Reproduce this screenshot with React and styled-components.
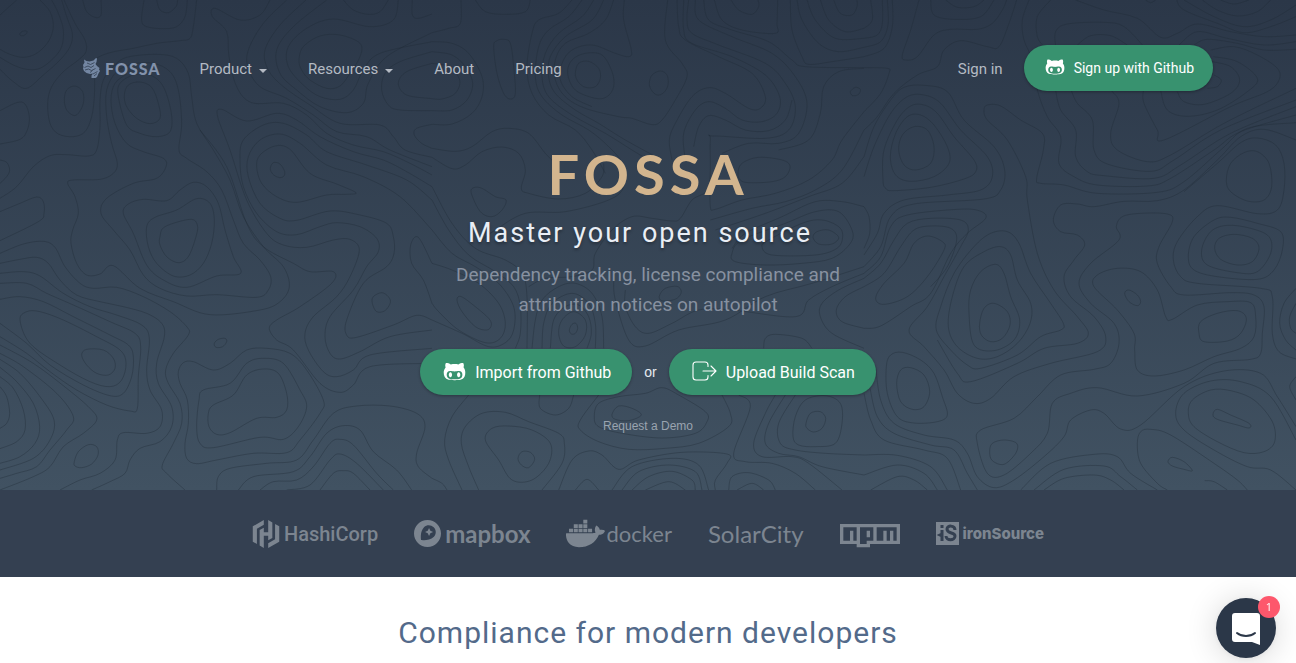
import React from 'react';
import styled, { createGlobalStyle } from 'styled-components';
import { FaGithubAlt, FaDocker, FaNpm } from 'react-icons/fa';
import { SiHashicorp, SiMapbox } from 'react-icons/si';

const GlobalStyle = createGlobalStyle`
  * {
    box-sizing: border-box;
  }

  body {
    margin: 0;
    background: #ffffff;
    font-family: Roboto, 'Liberation Sans', sans-serif;
  }

  a {
    color: inherit;
    text-decoration: none;
  }
`;

const Hero = styled.header`
  position: relative;
  padding: 45px 0 54px;
  background: linear-gradient(#2b3748, #415262);
`;

const Topography = styled.svg`
  position: absolute;
  inset: 0;
  width: 100%;
  height: 100%;
  fill: none;
  stroke: #1f2a36;
  stroke-width: 3;
  stroke-opacity: 0.36;
`;

const Container = styled.div`
  position: relative;
  max-width: 1170px;
  margin: 0 auto;
  padding: 0 20px;
`;

const Nav = styled.nav`
  display: flex;
  align-items: center;
  height: 46px;
`;

const Brand = styled.a`
  display: flex;
  align-items: center;
  gap: 5px;
  margin-right: 39px;
  color: #8292ab;
  font-family: Lato, sans-serif;
  font-size: 16px;
  font-weight: 900;
  letter-spacing: 1px;
`;

const NavLinks = styled.div`
  display: flex;
  flex: 1;
  gap: 41px;
`;

const NavItem = styled.a`
  display: flex;
  align-items: center;
  gap: 7px;
  padding-top: 2px;
  color: #b4bac3;
  font-size: 15px;
  line-height: 20px;
`;

const Caret = styled.span`
  margin-top: 3px;
  border: 4px solid transparent;
  border-top-color: currentColor;
  border-bottom: 0;
`;

const PillButton = styled.button`
  display: flex;
  align-items: center;
  gap: 9px;
  height: 46px;
  padding: 0 ${props => (props.$large ? 21 : 19)}px 0 ${props => (props.$large ? 23 : 21)}px;
  border: 0;
  border-radius: 23px;
  background: #38926f;
  box-shadow: 0 1px 3px rgba(0, 0, 0, 0.3);
  color: #ffffff;
  font-family: inherit;
  font-size: ${props => (props.$large ? 16 : 14)}px;
  font-weight: 400;
  cursor: pointer;

  svg {
    margin-bottom: 2px;
  }
`;

const NavActions = styled.div`
  display: flex;
  align-items: center;
  gap: 21px;
`;

const Intro = styled.div`
  display: flex;
  flex-direction: column;
  align-items: center;
  margin-top: 47px;
  text-align: center;
`;

const Wordmark = styled.div`
  color: #d3b58e;
  font-family: Lato, sans-serif;
  font-size: 56px;
  font-weight: 700;
  line-height: 72px;
  letter-spacing: 5px;
`;

const Tagline = styled.h1`
  margin: 5px 0 0;
  padding-right: 16px;
  color: #e9eef5;
  font-size: 27px;
  font-weight: 400;
  line-height: 36px;
  letter-spacing: 2px;
  text-shadow: 0 2px 3px rgba(0, 0, 0, 0.3);
`;

const Summary = styled.p`
  max-width: 420px;
  margin: 9px 0 0;
  color: #8791a0;
  font-size: 19px;
  line-height: 30px;
`;

const Actions = styled.div`
  display: flex;
  align-items: center;
  gap: 12px;
  margin-top: 29px;
`;

const Or = styled.span`
  color: #e6eaf0;
  font-family: 'Liberation Sans', sans-serif;
  font-size: 14px;
`;

const DemoLink = styled.a`
  margin-top: 21px;
  color: #9aa4b0;
  font-family: 'Liberation Sans', sans-serif;
  font-size: 12px;
  line-height: 20px;
`;

const Customers = styled.section`
  display: flex;
  align-items: center;
  justify-content: center;
  gap: 36px;
  height: 87px;
  background: #344051;
  color: #7c8590;
`;

const Customer = styled.div`
  display: flex;
  align-items: center;
  gap: ${props => props.$gap || 4}px;
  font-family: ${props => props.$font || 'Lato'}, sans-serif;
  font-size: ${props => props.$size}px;
  font-weight: ${props => props.$weight || 400};
`;

const Features = styled.section`
  padding: 36px 20px 10px;
  text-align: center;
`;

const SectionTitle = styled.h2`
  margin: 0;
  color: #536a8a;
  font-size: 30px;
  font-weight: 400;
  line-height: 40px;
  letter-spacing: 1px;
`;

const ChatButton = styled.button`
  position: fixed;
  right: 20px;
  bottom: 5px;
  width: 60px;
  height: 60px;
  padding: 0;
  border: 0;
  border-radius: 50%;
  background: #2b3748;
  box-shadow: 0 1px 6px rgba(0, 0, 0, 0.06), 0 2px 32px rgba(0, 0, 0, 0.16);
  cursor: pointer;
`;

const Badge = styled.span`
  position: absolute;
  top: -2px;
  right: -4px;
  width: 22px;
  height: 22px;
  border-radius: 50%;
  background: #fd576c;
  color: #ffffff;
  font-family: 'Open Sans', sans-serif;
  font-size: 11px;
  line-height: 21px;
`;

// Contour lines, one string per tile. "o" starts an open line, "c" a closed ring.
const tiles = [
  `o 0,45 50,0
  o 120,0 150,35 160,80 145,125 110,160 70,172 30,163 0,148
  c 60,100 68,94 80,93 80,100 70,107 61,106
  o 155,0 175,40 190,90 185,140 160,175 120,205 80,208 40,195 0,172
  o 185,0 200,50 217,100 210,140 180,180 130,225 80,265 40,245 0,208
  o 192,0 225,70 255,120 258,155 235,180 190,215 155,260 143,310 150,370 175,402 220,410 255,395 275,350 283,290 284,220 285,180 330,158 400,145 470,130 540,122 570,115 580,80 590,0
  o 248,0 260,35 285,52 303,45 303,0
  o 432,0 425,60 440,80 490,86 530,80 555,50 562,0
  o 470,0 480,30 505,38 528,20 533,0
  c 193,300 200,270 225,258 248,275 250,310 235,340 220,346 200,330
  o 0,332 50,308 75,312 88,350 82,390 60,418 0,432
  o 0,480 20,487 29,510 20,530 0,550
  o 0,595 50,560 100,500 150,467 200,464 265,468 290,450 300,380 300,300 310,240 340,200 380,172 470,163 530,175 565,220 575,290 590,370 640,450 690,540 730,650 790,740 850,800 868,860 840,905 780,930 630,944 520,905 420,865 340,797 300,822 260,825 230,790 213,730 218,690 235,640 225,590 203,550 220,540 300,538 340,520 352,490 335,430 320,350 320,270 350,215 400,192 460,190 510,215 535,270 545,370 537,450 560,475 620,515 665,570 700,660 730,730 780,780 812,830 805,870 770,892 650,884 560,888 480,865 430,825 390,750 340,690 303,640 320,595 400,550 470,535 498,500 490,475 430,455 380,430 345,370 333,300 345,250 380,222
  c 355,290 360,250 400,225 450,225 490,260 514,340 510,395 470,410 420,400 380,375
  c 373,285 385,255 420,246 455,262 475,310 480,355 450,371 410,355 380,320
  c 370,640 385,612 430,598 500,602 540,570 580,547 620,560 655,610 675,690 700,770 722,820 650,828 560,862 490,840 440,795 400,700
  c 440,680 465,652 530,630 590,596 630,610 643,660 635,730 610,790 570,825 520,828 470,790 445,740
  c 480,710 495,680 570,658 592,675 588,710 565,770 535,788 500,770 480,735
  o 0,635 60,610 110,591 130,605 132,640 115,665 0,722
  o 0,760 70,732 130,724 165,742 195,800 240,850 280,865 350,862 430,890 510,935 560,980 565,1005 520,1060 497,1110 505,1150 540,1210 545,1270 520,1330 487,1395 500,1420 555,1470
  o 0,790 60,778 110,772 145,790 180,840 230,885 300,905 370,920 440,940 485,970 493,1010 470,1090 475,1150 515,1220 515,1280 480,1325 420,1345 390,1380 375,1420 330,1445 275,1470
  o 0,820 70,815 120,828 190,880 270,920 350,945 425,975 448,1015 440,1110 450,1170 485,1230 480,1280 440,1300 370,1298 352,1320 345,1380 300,1420 240,1440 180,1470
  o 0,850 80,850 140,880 220,915 330,965 405,1000 422,1040 415,1130 412,1225 390,1233 320,1215 230,1170 150,1115 80,1060 0,1010
  o 0,898 60,890 130,905 220,950 330,1005 385,1035 400,1070 395,1130 370,1180 330,1187 250,1155 150,1095 80,1030 0,970
  c 60,960 80,935 120,935 190,960 290,1010 360,1050 378,1090 365,1140 330,1160 270,1145 180,1095 90,1030
  c 245,1065 260,1048 310,1050 340,1075 345,1105 325,1125 290,1120 260,1095
  o 0,1035 100,1090 200,1165 270,1225 290,1260 250,1300 190,1340 150,1400 100,1430 0,1470
  o 0,1060 70,1100 170,1180 220,1250 200,1290 150,1350 110,1400 50,1420 0,1435
  o 0,1078 60,1120 120,1190 162,1260 150,1320 100,1375 0,1410
  o 0,1102 50,1145 100,1210 119,1280 105,1330 60,1370 0,1390
  o 0,1130 40,1165 70,1230 75,1290 50,1325 0,1346
  o 0,1160 20,1190 29,1240 20,1270 0,1285
  c 223,1385 235,1355 265,1334 290,1340 294,1365 275,1392 245,1403 225,1398
  o 810,0 780,45 720,60 645,25 637,50 680,95 687,170 710,260 755,308 850,310 920,345 980,400 1060,435 1150,455 1230,490 1296,525
  o 860,0 790,70 745,150 745,205 780,260 860,295 940,345 1010,395 1100,410 1170,450 1296,500
  o 918,0 840,75 795,150 805,210 850,260 930,315 1020,370 1140,375 1180,410 1215,450 1296,472
  o 980,0 880,80 830,150 840,220 890,270 960,320 1040,338 1090,310 1105,250 1160,170 1296,98
  o 1195,0 1180,60 1110,80 1000,57 920,85 865,140 865,200 910,255 960,290 1020,298 1060,270 1090,210 1140,160 1296,125
  c 897,180 910,140 960,108 1020,105 1080,130 1080,170 1050,220 1020,258 980,265 930,240 905,210
  o 1030,0 1060,30 1105,43 1140,35 1165,0
  o 1237,0 1237,45 1255,55 1296,42
  o 1296,155 1200,185 1155,220 1145,270 1165,315 1200,330 1296,332
  o 1296,190 1220,215 1195,250 1220,285 1296,296
  o 1296,373 1250,385 1243,405 1265,430 1296,445
  o 1296,560 1220,515 1150,480 1060,455 960,410 890,360 830,340 740,363 665,328 653,350 690,450 740,600 800,700 850,735 920,742 1000,720 1050,718 1078,750 1050,830 1010,890 940,950 915,1000 925,1050 970,1115 1010,1130 1060,1110 1110,1065 1296,1045
  o 1296,600 1220,540 1100,495 980,455 920,405 850,370 790,375 730,420 720,480 730,560 770,640 830,695 890,704 960,680 1010,668 1080,680 1130,715 1135,755 1100,800 1060,870 990,950 975,1010 990,1060 1020,1077 1080,1055 1170,1010 1296,990
  o 1296,690 1200,590 1090,530 980,495 900,430 840,402 780,420 745,470 745,530 780,610 840,655 890,661 990,633 1080,645 1160,670 1180,710 1182,760 1160,800 1090,850 1040,960 1040,1005 1070,1012 1180,975 1250,946 1296,960
  c 770,500 780,465 825,438 870,448 930,520 1010,552 1068,578 1040,583 980,585 890,607 830,590 785,550
  c 811,505 820,488 840,492 854,515 850,530 835,532 818,522
  c 1117,910 1120,890 1145,878 1165,890 1171,908 1155,932 1130,935
  o 1296,790 1255,712 1232,735 1235,790 1270,840 1296,910
  c 643,1030 655,1018 675,1015 680,1025 668,1040 648,1042
  o 600,390 680,500 740,670 790,740 880,790 930,815 1000,815 995,850 900,920 830,960 808,985 830,1020 880,1050 960,1150 1020,1177 1060,1155 1110,1100 1296,1090
  c 535,1115 550,1088 580,1085 640,1110 690,1090 740,1050 800,1045 870,1060 920,1110 970,1200 960,1240 900,1320 860,1358 760,1360 650,1380 590,1391 560,1375 555,1330 565,1270 562,1200 540,1150
  c 597,1200 610,1170 690,1150 740,1090 790,1075 850,1090 900,1170 920,1220 895,1280 850,1318 780,1312 640,1343 600,1330 590,1280
  c 625,1240 640,1215 700,1185 740,1125 790,1107 835,1120 860,1180 860,1230 830,1252 770,1255 690,1298 650,1303 627,1280
  o 650,1470 655,1430 690,1405 800,1390 890,1380 940,1320 1000,1240 1070,1218 1170,1218 1250,1240 1275,1280 1250,1360 1255,1400 1296,1435
  o 715,1470 760,1430 880,1415 930,1370 980,1300 1030,1277 1080,1290 1120,1355 1190,1410 1235,1470
  o 780,1470 820,1445 890,1440 940,1400 990,1330 1020,1318 1060,1335 1130,1420 1180,1470
  o 860,1470 930,1455 990,1380 1020,1362 1070,1390 1150,1470
  o 960,1470 1000,1420 1030,1412 1060,1420 1110,1470`,
  `o 0,98 50,85 85,70 87,0
  o 130,0 160,35 220,43 280,35 295,0
  o 420,0 380,40 320,60 300,100 285,200 300,280 350,345 430,390 480,450 520,520
  o 450,0 410,50 350,90 320,140 310,230 330,290 390,345 470,390 530,440 570,490 575,560 530,600 400,635 280,640 190,690 150,720
  o 485,0 450,50 380,100 340,160 330,230 350,290 420,345 520,400 600,450 650,480
  o 515,0 480,60 400,110 355,170 350,230 370,280 430,330 500,370 580,420 690,480
  o 545,0 520,60 470,100 400,130 370,180 370,240 400,290 460,325 560,350 600,355 660,374 690,360 730,300 765,230 750,190 700,120 707,0
  o 577,0 575,60 598,150 590,170 550,160 480,135 420,150 390,190 385,240 420,290 480,320
  c 407,220 420,180 460,160 510,165 540,215 545,260 525,290 490,295 430,270
  c 430,220 440,190 470,184 500,205 505,235 490,260 460,262 438,245
  c 652,250 660,225 685,213 705,225 708,255 695,278 675,285 658,270
  c 185,140 195,122 215,118 235,130 245,200 250,280 235,297 215,280 195,220
  o 0,125 60,130 110,160 150,230 150,290 120,340 60,372 0,373
  o 0,155 60,165 100,200 122,250 105,300 60,330 0,332
  o 0,190 50,200 83,240 70,280 30,297 0,296
  o 0,445 70,454 120,440 180,395 230,385 290,400 340,460 380,500
  o 0,472 60,506 100,495 150,455 210,441 260,460 280,510 268,565 290,580 380,597 460,580 510,530 515,490
  c 118,580 125,563 150,565 190,590 222,600 210,630 180,650 145,635
  o 0,560 60,670 130,745 220,780 270,820 285,890 285,1045
  o 0,600 50,690 110,765 190,815 245,860 265,920 265,1000 250,1045
  o 0,690 60,760 130,800 200,850 245,920 245,990 220,1028 170,1040 90,1000 0,960
  o 0,790 60,810 140,850 200,910 220,970 205,1015 160,1028 80,990 20,935 0,910
  c 75,900 88,890 130,920 170,955 178,975 165,990 130,980 90,935
  o 300,1045 310,960 330,900 380,860 430,850 480,880 510,950 515,1045
  o 330,1045 335,970 360,910 420,880 470,910 490,970 490,1045
  o 355,1045 365,960 400,920 440,915 470,950 478,1000 465,1045
  c 380,1000 390,960 425,935 460,960 460,1005 430,1040 395,1038
  c 412,990 420,973 432,970 437,985 430,1000 418,1002
  o 290,860 340,835 420,830 480,810 490,760 540,690 600,650 660,655 720,663 745,655 780,600 830,560 835,420 845,408 1000,415 1070,390 1090,320 1060,250 1000,190 860,135 780,100 765,60 770,0
  o 735,0 740,80 760,120 860,170 960,220 1000,290 985,325 950,325 880,280 830,263 780,290 730,370 712,420 720,480
  o 755,0 755,90 780,130 900,170 1000,225 1043,290 1035,340 990,365 930,360 880,325 830,305 790,330 755,400 760,480
  o 790,0 800,60 900,110 1020,160 1090,230 1125,310 1100,400 1040,430 950,430 870,460
  o 785,440 800,380 830,347 880,360 940,390 1010,392 1060,360 1080,300
  o 815,0 830,60 900,90 1010,125 1080,180 1120,200 1296,203
  o 847,0 870,60 930,90 1030,100 1035,70 1037,0
  o 897,0 920,30 960,43 980,20 978,0
  c 918,520 930,490 980,472 1050,480 1074,498 1060,530 1020,545 950,548 925,540
  o 835,540 835,620 850,628 930,600 1030,580 1130,540 1200,480 1230,420 1296,335
  o 900,745 940,700 1050,650 1150,605 1230,605 1296,620
  c 900,760 930,720 1060,670 1150,635 1220,635 1260,690 1255,730 1200,775 1110,790 1000,795 910,785
  c 990,740 1010,720 1110,670 1170,660 1220,680 1232,710 1215,745 1150,765 1020,765
  c 1143,712 1155,695 1190,690 1220,712 1200,732 1160,732
  o 835,660 960,625 1060,605 1150,570 1230,510 1296,390
  o 850,690 1000,640 1130,590 1230,550 1296,470
  c 683,885 700,865 735,859 748,875 735,895 705,903 685,900
  o 545,840 550,900 590,1020 640,1038 740,990 880,960 1000,890 1140,850 1296,800
  o 580,870 580,920 610,980 650,1000 720,970 800,930 900,930 1090,950 1130,900 1200,860 1296,820
  o 1296,835 1220,870 1170,910 1165,950 1200,1000 1296,1045
  o 1296,860 1240,890 1213,930 1230,965 1296,985
  o 995,1045 1000,1015 1030,1003 1110,1015 1140,1045
  o 1075,0 1080,90 1110,170 1130,193 1200,185 1296,170
  o 1095,0 1110,60 1160,130 1220,155 1296,142
  o 1125,0 1150,60 1210,115 1296,115
  o 1165,0 1190,60 1240,95 1296,85
  o 1205,0 1225,40 1260,45 1275,20 1275,0
  c 1255,275 1270,262 1285,268 1280,283 1262,287
  o 1296,205 1220,215 1175,260 1165,340 1130,420 1040,450
  o 110,1185 60,1250 38,1320 50,1380 90,1470
  o 140,1470 110,1400 88,1330 100,1280 150,1240 220,1237 290,1265 380,1300 397,1330 390,1390 330,1470
  c 160,1320 180,1285 230,1278 300,1290 355,1330 350,1390 300,1440 240,1440 200,1380
  c 258,1375 270,1355 295,1357 308,1378 290,1403 268,1395
  o 323,1185 325,1225 370,1245 410,1225 425,1185
  o 500,1185 445,1260 445,1290 500,1325 590,1348 700,1345 800,1330 890,1280 895,1240 870,1185
  c 487,1250 500,1210 560,1190 640,1180 690,1163 740,1185 820,1235 825,1265 790,1300 690,1314 570,1300 500,1280
  c 540,1243 560,1218 600,1225 628,1245 590,1262 550,1258
  o 380,1470 420,1380 470,1353 510,1365 560,1408 620,1380 750,1357 885,1362 885,1390 850,1440 850,1470
  o 540,1470 600,1400 720,1375 800,1395 830,1470
  o 570,1470 620,1415 710,1395 790,1415 810,1470
  o 600,1470 650,1430 720,1414 780,1440 790,1470
  o 640,1470 710,1445 760,1470
  o 430,1470 465,1438 500,1470
  o 920,1185 955,1220 905,1360 940,1385 1020,1390 1090,1420 1150,1470
  o 1030,1185 1000,1240 965,1330 990,1370 1080,1370 1130,1390 1230,1470
  o 1060,1185 1010,1270 1000,1330 1040,1360 1100,1370 1170,1400 1296,1425
  o 1090,1185 1040,1270 1045,1330 1090,1350 1180,1360 1296,1365
  c 1083,1310 1090,1250 1120,1200 1180,1187 1225,1210 1230,1270 1210,1330 1150,1340 1100,1335
  c 1122,1270 1135,1240 1165,1235 1181,1255 1170,1285 1145,1296 1125,1285
  o 890,1470 900,1430 950,1418 1010,1440 1030,1470
  o 915,1470 960,1450 995,1470
  o 0,1435 30,1450 45,1470`,
  `o 20,0 25,60 0,85
  o 55,0 55,70 40,105 0,115
  o 70,0 72,75 50,125 0,142
  o 85,0 85,80 60,145 0,170
  o 165,0 140,90 115,165 125,180 160,170 210,105 260,88 340,88 385,70 415,30 428,0
  o 458,0 435,70 405,140 370,140 290,122 240,150 220,200 160,225 90,280 40,350 0,390
  o 200,0 210,45 270,58 350,50 390,0
  o 245,0 280,22 330,20 360,0
  o 495,0 475,60 480,120 505,180 520,270 550,350 590,410 585,490 630,530 700,555 850,558 920,535 1050,450 1130,395 1296,345
  o 560,0 520,50 520,110 540,140
  o 575,140 575,95 610,72 720,67 780,80 840,140
  o 640,135 680,107 740,107 790,135
  o 635,0 720,30 820,55 890,112 940,100 1000,72 1100,95 1200,110 1296,105
  o 938,0 960,30 1060,70 1140,98 1220,80 1296,50
  o 960,0 1050,50 1140,80 1220,60 1296,15
  o 1015,0 1060,30 1120,48 1180,35 1220,0
  o 1070,0 1110,12 1155,0
  o 945,135 1000,95 1090,115 1200,135 1296,125
  o 990,135 1030,118 1120,130 1200,150 1296,148
  o 1040,150 1110,140 1180,165 1240,205 1245,240 1210,275 1100,320 900,420 880,390 840,310 838,272
  o 1048,170 1120,185 1180,235 1150,275 1060,330 970,349 910,330 890,272
  o 1045,185 1100,200 1127,240 1100,280 1020,313 960,305 940,275
  o 1050,225 1072,240 1060,260 1030,265
  o 0,203 70,205 75,220 50,280 0,335
  o 0,470 30,380 80,300 120,262 180,256 250,275 300,360 390,440 422,510 410,570 360,597 150,612 80,650 50,740 0,800
  o 0,530 30,440 80,340 130,290 180,285 230,310 290,390 370,470 385,530 350,570 250,585 120,600 60,640 40,700 0,765
  c 57,540 60,450 100,360 140,318 180,315 220,340 270,410 330,480 335,515 300,537 200,562 90,572 65,565
  c 79,470 95,400 130,350 170,345 210,375 250,440 255,490 210,530 140,544 95,525
  c 104,450 115,405 150,380 190,390 210,440 200,490 155,510 120,495
  o 0,620 15,650 17,700 0,745
  o 0,985 50,978 140,920 200,880 260,760 310,700 365,655 345,632 280,628 130,645 80,680 50,770 0,820
  o 0,835 50,790 90,720 130,670 200,655 290,660 313,690 290,740 240,830 190,920 135,990 180,1040 240,1110 280,1180 330,1210 380,1195 450,1130 560,1090 700,1055 725,1010 690,950 620,890 600,830 630,780 662,735 640,705 590,695 568,660 590,615 640,612 690,620 780,604 880,602 960,570 1060,480 1130,410 1200,388 1296,420
  o 0,860 60,820 110,740 150,690 200,678 260,685 278,720 250,800 200,860
  c 35,895 60,850 120,790 150,730 190,708 235,725 240,750 190,830 130,890 60,913
  c 217,990 230,920 270,820 330,740 380,700 430,695 465,730 500,820 560,910 598,970 590,990 530,1010 460,1065 350,1105 310,1095 260,1050
  c 253,980 265,890 300,800 360,755 410,740 440,765 460,840 500,910 498,970 460,1030 400,1070 340,1075 280,1040
  c 315,940 320,870 350,815 395,793 420,820 440,890 467,960 450,1020 390,1052 330,1035
  c 347,970 360,925 390,910 430,935 438,975 415,1015 380,1025 352,1005
  o 220,1020 280,1120 320,1145 460,1090 540,1045 640,1030 673,1000 640,950 570,870 520,760 490,600 485,530 430,420 370,360 360,330 370,315 410,318 470,360 535,400 538,450 518,535 530,550 600,555 700,580 880,577 960,545 1070,450 1150,385 1296,368
  o 575,272 590,330 635,390 635,470 670,515 720,527 870,535 950,495 1100,400 1296,320
  o 622,272 640,310 685,360 690,450 730,492 860,514 930,480 1070,390 1296,300
  o 742,272 765,310 740,400 760,450 850,485 920,465 1080,370 1296,265
  c 1087,540 1100,490 1140,458 1180,455 1215,490 1223,560 1200,600 1150,603 1100,575
  o 960,575 1060,490 1130,428 1180,414 1235,435 1260,490 1260,570 1240,630 1180,641 1060,617 1000,650 940,725 928,780 950,830 1000,850 1190,865 1225,890 1225,1000 1245,1055 1296,1077
  c 973,770 990,710 1050,660 1100,652 1180,670 1250,695 1255,750 1230,810 1180,838 1060,830 990,810
  c 1013,750 1040,695 1090,676 1160,685 1215,710 1220,760 1180,815 1120,818 1030,795
  c 1052,745 1065,715 1110,703 1165,715 1185,745 1165,785 1120,795 1070,778
  c 757,680 775,650 830,640 910,642 925,665 885,740 880,790 920,860 960,885 1100,878 1170,885 1200,920 1195,1000 1190,1060 1160,1078 1050,1090 960,1150 820,1188 700,1163 620,1180 565,1210 550,1300 500,1360 420,1425 370,1420 340,1330 350,1290 450,1255 520,1190 590,1125 690,1108 740,1090 765,1030 750,970 680,910 645,850 680,790 765,720
  c 690,860 700,825 760,805 830,815 880,870 905,950 925,958 1000,915 1090,905 1160,908 1175,950 1170,1010 1130,1045 1050,1070 960,1110 870,1128 820,1110 812,1050 810,1000 760,930
  c 1005,1000 1010,965 1060,940 1120,932 1147,955 1130,1000 1090,1023 1020,1025
  c 782,880 795,870 820,885 830,905 820,917 795,905
  o 1296,865 1260,910 1247,970 1265,1020 1296,1050
  o 1296,910 1277,950 1280,985 1296,1000
  c 67,1100 80,1065 115,1057 170,1080 210,1120 235,1190 250,1245 220,1265 150,1269 100,1250 70,1180
  c 98,1150 110,1110 140,1103 180,1125 197,1175 180,1220 145,1228 110,1205
  c 377,1355 385,1330 420,1320 458,1330 455,1360 420,1393 385,1382
  o 35,1100 50,1200 90,1270 180,1305 270,1320 310,1360 340,1430 390,1463 450,1440 540,1370 600,1310 620,1260 680,1230 720,1240 770,1287 830,1275 960,1160 1080,1113 1190,1120 1240,1190 1296,1280
  o 18,1165 40,1250 90,1300 200,1335 270,1350 310,1420 340,1470
  o 0,1180 20,1260 60,1320 180,1350 250,1375 290,1470
  o 0,1365 100,1366 200,1400 250,1470
  o 0,1425 100,1395 180,1420 220,1470
  o 20,1470 100,1430 150,1440 190,1470
  o 470,1470 560,1390 690,1363 760,1370 800,1420 880,1470
  o 510,1470 600,1408 720,1398 770,1430 820,1470
  o 540,1470 600,1435 690,1425 740,1440 780,1470
  o 1296,1320 1220,1190 1130,1145 1040,1143 960,1180 935,1240 960,1290 1050,1350 1150,1400 1220,1410 1296,1470
  c 973,1240 985,1200 1040,1170 1100,1172 1170,1200 1225,1265 1232,1325 1200,1355 1140,1358 1060,1325 990,1280
  c 1047,1243 1060,1228 1100,1245 1155,1270 1155,1284 1120,1275 1060,1258
  o 910,1470 880,1450 830,1390 820,1330 830,1295 860,1288 920,1305 1050,1390 1120,1440 1150,1470
  c 912,1385 925,1372 960,1385 985,1412 960,1408 925,1398
  o 1022,1442 1050,1445 1090,1470
  o 1296,1130 1277,1160 1296,1200
  o 845,0 860,8 875,0`,
];

// Catmull-Rom spline through the points, written as cubic segments
const toPath = (line) => {
  const [kind, ...pairs] = line.trim().split(/\s+/);
  const pts = pairs.map(pair => pair.split(',').map(Number));
  const closed = kind === 'c';
  const n = pts.length;
  const at = i => (closed ? pts[(i + n) % n] : pts[Math.max(0, Math.min(n - 1, i))]);
  let d = `M${pts[0]}`;
  for (let i = 0; i < (closed ? n : n - 1); i++) {
    const [a, b, c, e] = [at(i - 1), at(i), at(i + 1), at(i + 2)];
    d += `C${b[0] + (c[0] - a[0]) / 6},${b[1] + (c[1] - a[1]) / 6} ${c[0] - (e[0] - b[0]) / 6},${c[1] - (e[1] - b[1]) / 6} ${c}`;
  }
  return closed ? `${d}Z` : d;
};

const contours = tiles.map(tile => tile.split('\n').map(toPath).join(''));

const Contours = () => (
  <Topography viewBox="0 0 3888 1470" preserveAspectRatio="xMidYMin slice" aria-hidden="true">
    {contours.map((d, index) => (
      <path key={index} d={d} transform={`translate(${index * 1296} 0)`} />
    ))}
  </Topography>
);

const FossaMark = () => (
  <svg width="17" height="20" viewBox="0 0 34 40" aria-hidden="true">
    <path fill="#7386a2" d="M2 3l5 3 6 1 8-2 5-5 2 1-1 7-2 4 3 4 5 4-1 3 2 3-3 5-3 7-6 4-5 1v-8l3-4-6 1-7-2-5-4-2-5 1-3-1-4 3-5z" />
    <path fill="none" stroke="#2e3b4c" strokeWidth="1.5" d="M3 19l7-3 6 3 6-4M8 10l7 3 8-4M4 24l7-2 6 3 8-4M14 29l5-4M20 32l9-5M22 36l6-5" />
  </svg>
);

const ExportIcon = () => (
  <svg width="25" height="20" viewBox="0 0 25 20" fill="none" stroke="#fff" strokeWidth="1.1" strokeLinecap="round" strokeLinejoin="round" aria-hidden="true">
    <path d="M16 5.500V4a3 3 0 0 0-3-3H4a3 3 0 0 0-3 3v12a3 3 0 0 0 3 3h9a3 3 0 0 0 3-3v-1.500M11 10h13M19 5l5 5-5 5" />
  </svg>
);

const IronSourceMark = () => (
  <svg width="23" height="23" viewBox="0 0 23 23" aria-hidden="true">
    <rect width="23" height="23" fill="#7c8590" />
    <path fill="none" stroke="#344051" strokeWidth="3" d="M6 3v3M6 8v4l-2 1 2 1v5M19 8c0-5-8-5-8-1 0 5 8 3 8 7 0 5-9 5-9 0" />
  </svg>
);

const App = () => {
  return (
    <>
      <GlobalStyle />
      <Hero>
        <Contours />
        <Container>
          <Nav>
            <Brand href="#"><FossaMark />FOSSA</Brand>
            <NavLinks>
              <NavItem href="#product">Product<Caret /></NavItem>
              <NavItem href="#resources">Resources<Caret /></NavItem>
              <NavItem href="#about">About</NavItem>
              <NavItem href="#pricing">Pricing</NavItem>
            </NavLinks>
            <NavActions>
              <NavItem href="#signin">Sign in</NavItem>
              <PillButton><FaGithubAlt size={20} />Sign up with Github</PillButton>
            </NavActions>
          </Nav>

          <Intro>
            <Wordmark>FOSSA</Wordmark>
            <Tagline>Master your open source</Tagline>
            <Summary>Dependency tracking, license compliance and attribution notices on autopilot</Summary>
            <Actions>
              <PillButton $large><FaGithubAlt size={23} />Import from Github</PillButton>
              <Or>or</Or>
              <PillButton $large><ExportIcon />Upload Build Scan</PillButton>
            </Actions>
            <DemoLink href="#demo">Request a Demo</DemoLink>
          </Intro>
        </Container>
      </Hero>

      <Customers>
        <Customer $font="Roboto" $size={20} $weight={500}><SiHashicorp size={28} />HashiCorp</Customer>
        <Customer $size={24} $weight={700}><SiMapbox size={27} />mapbox</Customer>
        <Customer $size={22} $gap={1}><FaDocker size={39} />docker</Customer>
        <Customer $size={24}>SolarCity</Customer>
        <Customer $size={16}><FaNpm size={60} title="npm" /></Customer>
        <Customer $font="Inter" $size={15} $weight={800}><IronSourceMark />ironSource</Customer>
      </Customers>

      <Features>
        <SectionTitle>Compliance for modern developers</SectionTitle>
      </Features>

      <ChatButton aria-label="Open chat">
        <svg width="60" height="60" viewBox="0 0 60 60" aria-hidden="true">
          <path fill="#fff" d="M19 15h22a3 3 0 0 1 3 3v29l-8-3H19a3 3 0 0 1-3-3V18a3 3 0 0 1 3-3z" />
          <path fill="none" stroke="#2b3748" strokeWidth="2" strokeLinecap="round" d="M21 35c5 4 13 4 18 0" />
        </svg>
        <Badge>1</Badge>
      </ChatButton>
    </>
  );
};

export default App;
